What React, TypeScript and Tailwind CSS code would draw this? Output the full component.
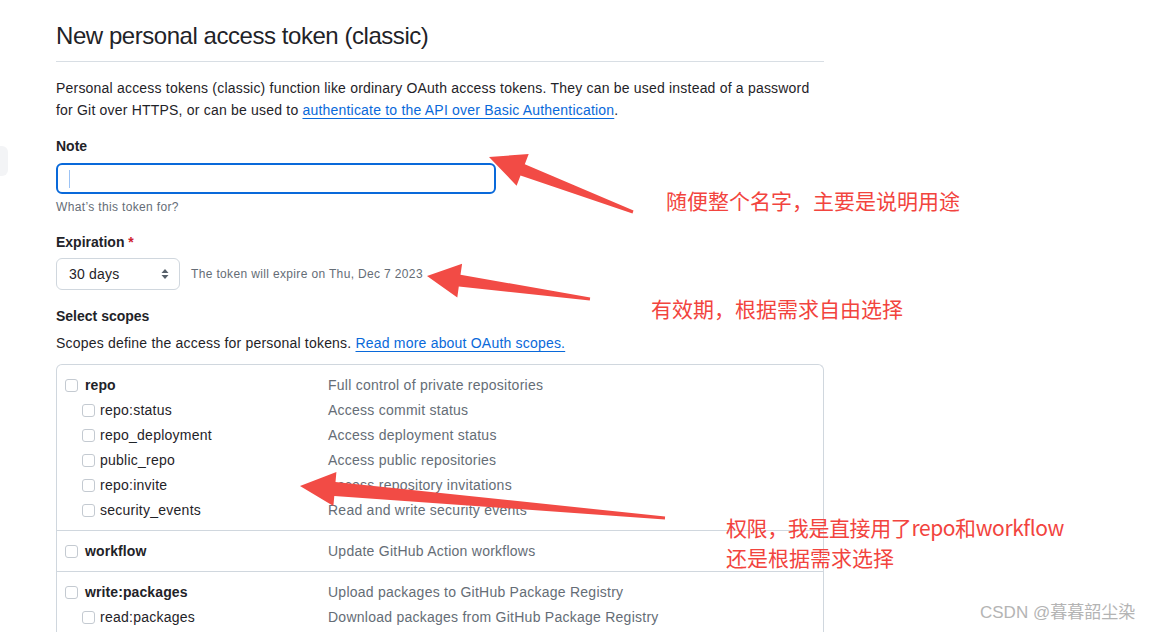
import React from 'react';

type Scope = { name: string; desc: string; sub?: boolean };

const groups: Scope[][] = [
  [
    { name: 'repo', desc: 'Full control of private repositories' },
    { name: 'repo:status', desc: 'Access commit status', sub: true },
    { name: 'repo_deployment', desc: 'Access deployment status', sub: true },
    { name: 'public_repo', desc: 'Access public repositories', sub: true },
    { name: 'repo:invite', desc: 'Access repository invitations', sub: true },
    { name: 'security_events', desc: 'Read and write security events', sub: true },
  ],
  [{ name: 'workflow', desc: 'Update GitHub Action workflows' }],
  [
    { name: 'write:packages', desc: 'Upload packages to GitHub Package Registry' },
    { name: 'read:packages', desc: 'Download packages from GitHub Package Registry', sub: true },
  ],
];

function arrowPoints(
  tail: [number, number],
  tip: [number, number],
  headLen: number,
  headHalf: number,
  shaftHead: number,
  shaftTail: number
) {
  const dx = tip[0] - tail[0];
  const dy = tip[1] - tail[1];
  const len = Math.hypot(dx, dy);
  const ux = dx / len;
  const uy = dy / len;
  const nx = -uy;
  const ny = ux;
  const bx = tip[0] - ux * headLen;
  const by = tip[1] - uy * headLen;
  const p = (x: number, y: number) => `${x.toFixed(1)},${y.toFixed(1)}`;
  return [
    p(tip[0], tip[1]),
    p(bx + nx * headHalf, by + ny * headHalf),
    p(bx + nx * shaftHead, by + ny * shaftHead),
    p(tail[0] + nx * shaftTail, tail[1] + ny * shaftTail),
    p(tail[0] - nx * shaftTail, tail[1] - ny * shaftTail),
    p(bx - nx * shaftHead, by - ny * shaftHead),
    p(bx - nx * headHalf, by - ny * headHalf),
  ].join(' ');
}

function Checkbox() {
  return <span className="inline-block w-[13px] h-[13px] rounded-[3px] border border-[#c4cad1] bg-white shrink-0" />;
}

const cjk = { fontFamily: '"Noto Sans CJK SC", sans-serif' };

export default function App() {
  return (
    <div
      className="relative w-[1165px] h-[632px] overflow-hidden bg-white text-[#1f2328] tracking-[0.2px]"
      style={{ fontFamily: '"Liberation Sans", Arial, sans-serif' }}
    >
      {/* clipped sidebar item */}
      <div className="absolute left-0 top-[146px] w-[8px] h-[30px] rounded-r-md bg-[#f3f4f6]" />

      <div className="ml-[56px] w-[768px] pt-[21px]">
        <h1 className="text-[24px] leading-[30px] font-normal tracking-[-0.45px] pb-[10px] border-b border-[#d8dee4]">
          New personal access token (classic)
        </h1>

        <p className="mt-[16px] text-[14px] leading-[21.5px]">
          Personal access tokens (classic) function like ordinary OAuth access tokens. They can be used instead of a password
          for Git over HTTPS, or can be used to{' '}
          <a className="text-[#0969da] underline underline-offset-[3px]">authenticate to the API over Basic Authentication</a>.
        </p>

        <div className="mt-[15px] text-[14px] leading-[21px] font-bold tracking-normal">Note</div>
        <div className="mt-[6px] w-[440px] h-[31px] rounded-[6px] border-2 border-[#0969da] flex items-center pl-[11px]">
          <span className="w-px h-[18px] bg-[#9cc3f5]" />
        </div>
        <div className="mt-[4px] text-[12px] leading-[18px] tracking-[0.35px] text-[#656d76]">What’s this token for?</div>

        <div className="mt-[16px] text-[14px] leading-[21px] font-bold tracking-normal">
          Expiration <span className="text-[#cf222e]">*</span>
        </div>
        <div className="mt-[5px] flex items-center gap-[11px]">
          <div className="w-[124px] h-[32px] rounded-[6px] border border-[#d0d7de] bg-white flex items-center justify-between pl-[12px] pr-[10px] text-[14px]">
            <span>30 days</span>
            <svg width="8" height="12" viewBox="0 0 8 12" className="fill-[#57606a]">
              <path d="M4 1 L7.5 5 H0.5 Z" />
              <path d="M4 11 L7.5 7 H0.5 Z" />
            </svg>
          </div>
          <span className="text-[12px] tracking-[0.35px] text-[#656d76]">The token will expire on Thu, Dec 7 2023</span>
        </div>

        <div className="mt-[16px] text-[14px] leading-[21px] font-bold tracking-normal">Select scopes</div>
        <p className="mt-[6px] text-[14px] leading-[21px]">
          Scopes define the access for personal tokens.{' '}
          <a className="text-[#0969da] underline underline-offset-[3px]">Read more about OAuth scopes.</a>
        </p>

        <div className="mt-[10px] rounded-[6px] border border-[#d0d7de] border-b-0 rounded-b-none">
          {groups.map((g, gi) => (
            <div key={gi} className={`pt-2 pb-[7px] ${gi > 0 ? 'border-t border-[#d0d7de]' : ''}`}>
              {g.map((s) => (
                <div key={s.name} className="flex items-center h-[25px] text-[14px]">
                  <div
                    className={`w-[271px] flex items-center ${s.sub ? 'pl-[25px] gap-[5px]' : 'pl-[8px] gap-[7px]'}`}
                  >
                    <Checkbox />
                    <span className={s.sub ? 'tracking-[0.25px]' : 'font-bold tracking-[0.1px]'}>{s.name}</span>
                  </div>
                  <span className="text-[#656d76] tracking-[0.25px]">{s.desc}</span>
                </div>
              ))}
            </div>
          ))}
        </div>
      </div>

      {/* annotations */}
      <svg className="absolute inset-0 pointer-events-none" width="1165" height="632">
        <polygon fill="#f24b45" points={arrowPoints([633, 212], [489, 157], 36, 17, 6, 1.5)} />
        <polygon fill="#f24b45" points={arrowPoints([590, 299], [427, 276], 33, 17, 6, 1.5)} />
        <polygon fill="#f24b45" points={arrowPoints([665, 518], [300, 486], 35, 17, 7, 1.5)} />
      </svg>

      <div className="absolute left-[666px] top-[186px] text-[21px] leading-[28px] tracking-normal text-[#f2443e]" style={cjk}>
        随便整个名字，主要是说明用途
      </div>
      <div className="absolute left-[651px] top-[294px] text-[21px] leading-[28px] tracking-normal text-[#f2443e]" style={cjk}>
        有效期，根据需求自由选择
      </div>
      <div className="absolute left-[726px] top-[512px] text-[21px] leading-[30px] tracking-normal text-[#f2443e]" style={cjk}>
        <div className="tracking-[-0.4px]">权限，我是直接用了repo和workflow</div>
        <div>还是根据需求选择</div>
      </div>

      <div
        className="absolute left-[980px] top-[601px] text-[17px] leading-[24px] tracking-normal text-[#b4b4b4]"
        style={{ fontFamily: '"Liberation Sans", "Noto Sans CJK SC", sans-serif' }}
      >
        CSDN @暮暮韶尘染
      </div>
    </div>
  );
}
